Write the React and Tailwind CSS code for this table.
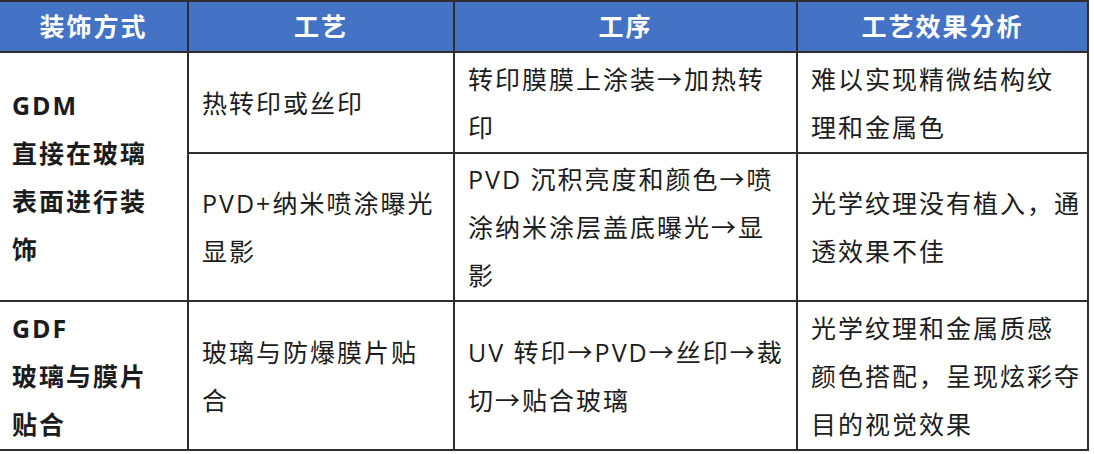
import React from "react";

const font = { fontFamily: '"Open Sans","Noto Sans CJK SC",sans-serif' };

function Lines({ lines, bold }) {
  return (
    <div className={`whitespace-nowrap text-[25px] leading-[48px] tracking-[2px] text-[#1c1c1c] ${bold ? "font-bold" : ""}`}>
      {lines.map((l, i) => (
        <div key={i}>{l}</div>
      ))}
    </div>
  );
}

function Cell({ lines, bold, className = "", pl = "pl-[13px]" }) {
  return (
    <div className={`bg-white flex items-center ${pl} ${className}`}>
      <Lines lines={lines} bold={bold} />
    </div>
  );
}

function Head({ children }) {
  return (
    <div className="bg-[#4472c4] flex items-center justify-center text-white font-bold text-[25px] tracking-[2px]">
      {children}
    </div>
  );
}

export default function App() {
  return (
    <div className="w-[1094px] h-[454px] bg-white" style={font}>
      <div className="w-[1089px] grid grid-cols-[187px_264px_341px_289px] grid-rows-[49px_99px_146px_147px] gap-[2px] bg-[#2e2e2e] pt-[2px] pr-[2px] pb-[2px]">
        <Head>装饰方式</Head>
        <Head>工艺</Head>
        <Head>工序</Head>
        <Head>工艺效果分析</Head>

        <Cell
          className="row-span-2"
          pl="pl-[12px]"
          bold
          lines={["GDM", "直接在玻璃", "表面进行装", "饰"]}
        />
        <Cell lines={["热转印或丝印"]} />
        <Cell lines={["转印膜膜上涂装→加热转", "印"]} />
        <Cell lines={["难以实现精微结构纹", "理和金属色"]} />

        <Cell lines={["PVD+纳米喷涂曝光", "显影"]} />
        <Cell lines={["PVD 沉积亮度和颜色→喷", "涂纳米涂层盖底曝光→显", "影"]} />
        <Cell lines={["光学纹理没有植入，通", "透效果不佳"]} />

        <Cell pl="pl-[12px]" bold lines={["GDF", "玻璃与膜片", "贴合"]} />
        <Cell lines={["玻璃与防爆膜片贴", "合"]} />
        <Cell lines={["UV 转印→PVD→丝印→裁", "切→贴合玻璃"]} />
        <Cell lines={["光学纹理和金属质感", "颜色搭配，呈现炫彩夺", "目的视觉效果"]} />
      </div>
    </div>
  );
}
